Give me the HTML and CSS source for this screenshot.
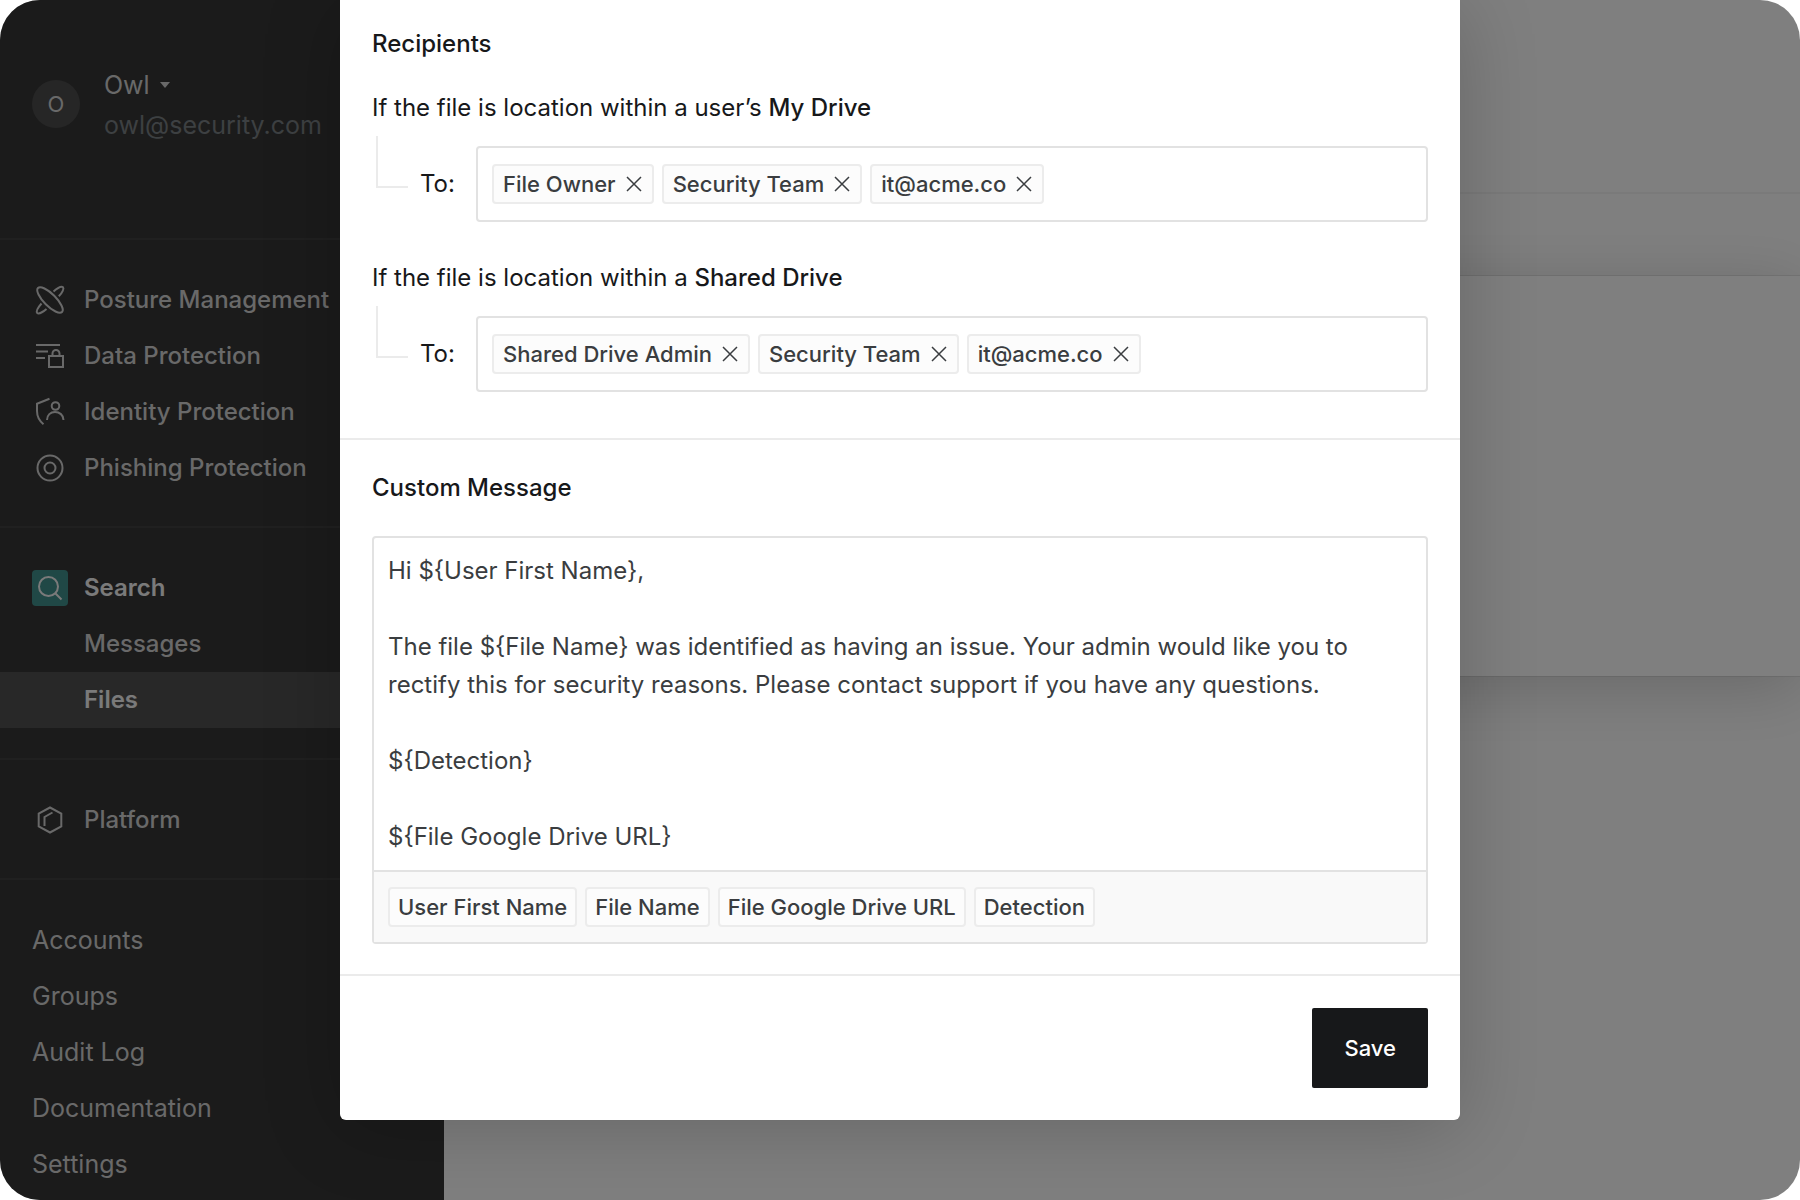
FILE: index.html
```html
<!DOCTYPE html>
<html lang="en">
<head>
	<meta charset="UTF-8">
	<title>Files</title>
	<link rel="stylesheet" href="styles.css">
</head>
<body>
	<div class="app">
		<aside class="sidebar">
			<div class="account">
				<span class="avatar">O</span>
				<div class="account-text">
					<button type="button" class="account-name">Owl <svg width="10" height="6" viewBox="0 0 10 6"><path d="M0 0h10L5 6z"/></svg></button>
					<div class="account-mail">owl@security.com</div>
				</div>
			</div>
			<nav>
				<ul class="group">
					<li><a href="#">
						<span class="icon"><svg width="36" height="36" viewBox="0 0 36 36">
							<ellipse cx="18" cy="18" rx="17" ry="6" transform="rotate(45 18 18)"/>
							<path d="M21.500 9.500C25.500 6 29.500 4 31 5.200C32.200 6.500 30.500 10.500 26.800 14.300"/>
							<path d="M9.500 21.500C6 25.500 4 29.500 5.200 31C6.500 32.200 10.500 30.500 14.500 27"/>
						</svg></span>Posture Management</a></li>
					<li><a href="#">
						<span class="icon"><svg width="36" height="36" viewBox="0 0 36 36">
							<path d="M4 7h24M4 13.500h12M4 20h9M17 18h14v11H17zM20.500 18v-2.500a3.500 3.500 0 0 1 7 0V18"/>
						</svg></span>Data Protection</a></li>
					<li><a href="#">
						<span class="icon"><svg width="36" height="36" viewBox="0 0 36 36">
							<path d="M17.500 4.800L5 9.800V17c0 5.500 2 9.500 6.500 13.200M15 26c0-5 3.500-8 8-8s8.500 3 8.500 8"/>
							<circle cx="23.500" cy="12" r="3.800"/>
						</svg></span>Identity Protection</a></li>
					<li><a href="#">
						<span class="icon"><svg width="36" height="36" viewBox="0 0 36 36">
							<circle cx="18" cy="18" r="12.500"/>
							<circle cx="18" cy="18" r="5.500"/>
						</svg></span>Phishing Protection</a></li>
				</ul>
				<ul class="group">
					<li><a href="#" class="current">
						<span class="icon teal"><svg width="36" height="36" viewBox="0 0 36 36">
							<circle cx="16.500" cy="16.500" r="9.500"/>
							<path d="M23 23l6.500 6.500"/>
						</svg></span>Search</a></li>
					<li><a href="#" class="sub">Messages</a></li>
					<li class="selected"><a href="#" class="sub current">Files</a></li>
				</ul>
				<ul class="group">
					<li><a href="#">
						<span class="icon"><svg width="36" height="36" viewBox="0 0 36 36">
							<path d="M18 5.500l11.300 6v13L18 30.500l-11.300-6v-13zM12.500 24v-9l8-4.500"/>
						</svg></span>Platform</a></li>
				</ul>
				<ul class="group links">
					<li><a href="#">Accounts</a></li>
					<li><a href="#">Groups</a></li>
					<li><a href="#">Audit Log</a></li>
					<li><a href="#">Documentation</a></li>
					<li><a href="#">Settings</a></li>
				</ul>
			</nav>
		</aside>
		<main class="page">
			<div class="page-head"></div>
			<div class="page-card"></div>
		</main>
		<div class="overlay">
			<form class="modal" role="dialog" aria-label="Notification">
				<section class="recipients">
					<h2>Recipients</h2>
					<div class="rule">
						<p>If the file is location within a user’s <b>My Drive</b></p>
						<div class="to">
							<span class="elbow"></span>
							<label for="to-my">To:</label>
							<div class="field">
								<span class="tag">File Owner <button type="button" aria-label="Remove"><svg width="16" height="16" viewBox="0 0 16 16"><path d="M1 1l14 14M15 1L1 15"/></svg></button></span>
								<span class="tag">Security Team <button type="button" aria-label="Remove"><svg width="16" height="16" viewBox="0 0 16 16"><path d="M1 1l14 14M15 1L1 15"/></svg></button></span>
								<span class="tag">it@acme.co <button type="button" aria-label="Remove"><svg width="16" height="16" viewBox="0 0 16 16"><path d="M1 1l14 14M15 1L1 15"/></svg></button></span>
								<input type="text" id="to-my">
							</div>
						</div>
					</div>
					<div class="rule">
						<p>If the file is location within a <b>Shared Drive</b></p>
						<div class="to">
							<span class="elbow"></span>
							<label for="to-shared">To:</label>
							<div class="field">
								<span class="tag">Shared Drive Admin <button type="button" aria-label="Remove"><svg width="16" height="16" viewBox="0 0 16 16"><path d="M1 1l14 14M15 1L1 15"/></svg></button></span>
								<span class="tag">Security Team <button type="button" aria-label="Remove"><svg width="16" height="16" viewBox="0 0 16 16"><path d="M1 1l14 14M15 1L1 15"/></svg></button></span>
								<span class="tag">it@acme.co <button type="button" aria-label="Remove"><svg width="16" height="16" viewBox="0 0 16 16"><path d="M1 1l14 14M15 1L1 15"/></svg></button></span>
								<input type="text" id="to-shared">
							</div>
						</div>
					</div>
				</section>
				<section class="message">
					<h2><label for="msg">Custom Message</label></h2>
					<div class="editor">
						<textarea id="msg" rows="8" spellcheck="false">Hi ${User First Name},

The file ${File Name} was identified as having an issue. Your admin would like you to rectify this for security reasons. Please contact support if you have any questions.

${Detection}

${File Google Drive URL}</textarea>
						<div class="variables">
							<button type="button" class="tag">User First Name</button>
							<button type="button" class="tag">File Name</button>
							<button type="button" class="tag">File Google Drive URL</button>
							<button type="button" class="tag">Detection</button>
						</div>
					</div>
				</section>
				<footer>
					<button type="submit" class="save">Save</button>
				</footer>
			</form>
		</div>
	</div>
</body>
</html>
```
FILE: styles.css
```css
*{
	margin:0;
	padding:0;
	box-sizing:border-box;
}
body{
	background:#fff;
	font-family:Inter,"Liberation Sans",sans-serif;
	font-size:24px;
	line-height:32px;
	color:#17181a;
}
ul{
	list-style:none;
}
a{
	color:inherit;
	text-decoration:none;
}
button,input,textarea{
	font:inherit;
	color:inherit;
	background:none;
	border:0;
	outline:0;
}
button{
	cursor:pointer;
}
svg{
	display:block;
	flex:none;
}
.app{
	position:relative;
	display:flex;
	height:100vh;
	min-height:1120px;
	border-radius:40px;
	overflow:hidden;
}

/* sidebar */
.sidebar{
	width:444px;
	flex:none;
	background:#363636;
	color:#d2d2d2;
}
.account{
	display:flex;
	align-items:center;
	gap:24px;
	height:240px;
	padding:0 32px 30px;
	border-bottom:2px solid #404040;
}
.avatar{
	width:48px;
	height:48px;
	border-radius:50%;
	background:#4c4c4c;
	font-size:22px;
	line-height:48px;
	text-align:center;
}
.account-text{
	padding-top:2px;
	font-size:25px;
	line-height:40px;
}
.account-name{
	display:flex;
	align-items:center;
	gap:10px;
}
.account-name svg{
	fill:#d2d2d2;
}
.account-mail{
	color:#7a8084;
}
.group{
	padding:32px 0 30px;
	border-bottom:2px solid #404040;
}
.group:last-child{
	border-bottom:0;
}
.group a{
	display:flex;
	align-items:center;
	gap:16px;
	height:56px;
	padding-left:32px;
	font-weight:500;
}
.group a.sub{
	padding-left:84px;
}
.group a.current{
	font-weight:600;
	color:#f4f4f4;
}
.group .selected{
	background:#505050;
}
.links a{
	font-size:25px;
	font-weight:400;
}
.icon{
	border-radius:4px;
}
.icon svg{
	fill:none;
	stroke:currentColor;
	stroke-width:2;
}
.teal{
	background:#40908c;
}

/* page under the dialog */
.page{
	flex:1;
	background:#fff;
}
.page-head{
	height:194px;
	border-bottom:2px solid #f4f4f4;
}
.page-card{
	height:400px;
	margin:82px 0 0 32px;
	box-shadow:0 0 0 1px rgba(0,0,0,.08),0 12px 60px rgba(0,0,0,.18);
}

/* dialog */
.overlay{
	position:absolute;
	inset:0;
	display:flex;
	justify-content:center;
	align-items:flex-start;
	background:rgba(0,0,0,.5);
}
.modal{
	width:100%;
	max-width:1120px;
	background:#fff;
	border-radius:0 0 6px 6px;
	box-shadow:0 8px 80px rgba(0,0,0,.2);
}
.modal section{
	border-bottom:2px solid #ebebeb;
}
h2,b{
	font-size:24px;
	font-weight:500;
}
.recipients{
	padding:28px 32px 46px;
}
.rule{
	margin-top:32px;
}
.rule + .rule{
	margin-top:40px;
}
.to{
	display:grid;
	grid-template-columns:48px 56px minmax(0,1fr);
	align-items:center;
	margin-top:22px;
}
.elbow{
	align-self:start;
	width:32px;
	height:52px;
	margin:-10px 0 0 4px;
	border:solid #ebebeb;
	border-width:0 0 2px 2px;
}
.field{
	display:flex;
	align-items:center;
	gap:8px;
	height:76px;
	padding:0 14px;
	border:2px solid #e2e2e2;
	border-radius:4px;
}
.field input{
	flex:1;
	width:0;
	min-width:0;
}
.tag{
	display:flex;
	align-items:center;
	gap:10px;
	height:40px;
	padding:0 10px 0 9px;
	border:2px solid #ececec;
	border-radius:4px;
	background:#fcfcfc;
	font-size:22px;
	font-weight:500;
	white-space:nowrap;
	color:#3a3d40;
}
.tag svg{
	fill:none;
	stroke:#3a3d40;
	stroke-width:1.5;
}
.message{
	padding:32px 32px 30px;
}
.editor{
	margin-top:32px;
	border:2px solid #e2e2e2;
	border-radius:4px;
}
.editor textarea{
	display:block;
	width:100%;
	padding:14px;
	line-height:38px;
	color:#3a3d40;
	resize:none;
	overflow:hidden;
}
.variables{
	display:flex;
	gap:8px;
	padding:15px 14px;
	border-top:2px solid #e2e2e2;
	background:#f9f9f9;
}
.variables .tag{
	padding:0 8px;
}
footer{
	display:flex;
	justify-content:flex-end;
	padding:32px;
}
.save{
	height:80px;
	padding:0 32px;
	border-radius:2px;
	background:#17181a;
	color:#fff;
	font-size:22px;
	font-weight:500;
}
```
